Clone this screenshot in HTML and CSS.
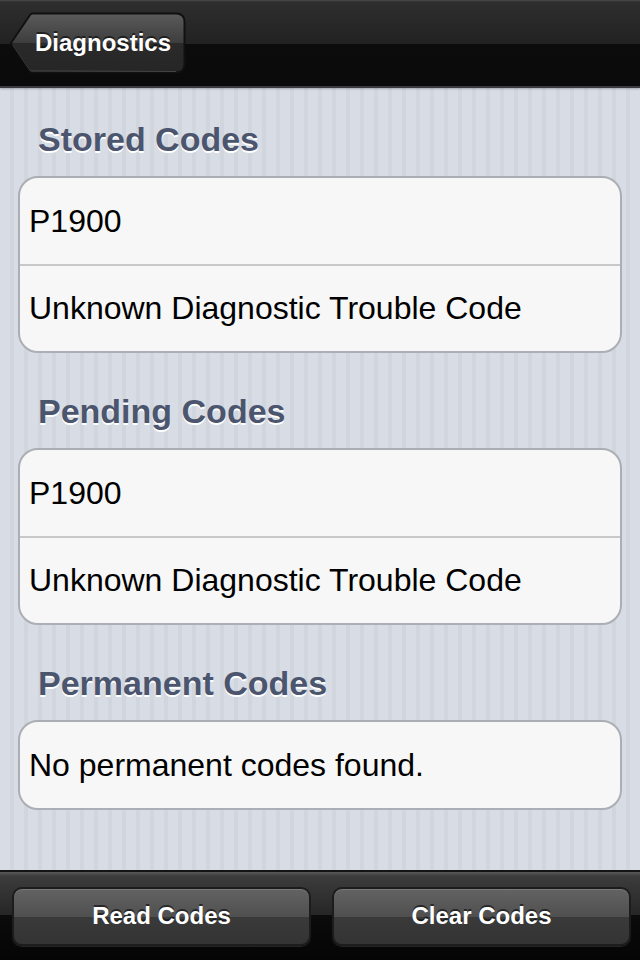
FILE: index.html
```html
<!DOCTYPE html>
<html>
<head>
<meta charset="utf-8">
<link rel="stylesheet" href="styles.css">
</head>
<body>
<div class="screen">
  <header class="navbar">
    <div class="back">
      <svg class="back-shape" width="178" height="62" viewBox="0 0 178 62">
        <defs>
          <linearGradient id="bg" x1="0" y1="0" x2="0" y2="1">
            <stop offset="0" stop-color="#5b5b5b"/>
            <stop offset="0.5" stop-color="#3d3d3d"/>
            <stop offset="0.5" stop-color="#2a2a2a"/>
            <stop offset="1" stop-color="#262626"/>
          </linearGradient>
        </defs>
        <path d="M2 31 L21 3 Q22 1.5 24 1.5 L167 1.5 Q175.5 1.5 175.5 10 L175.5 52 Q175.5 60.5 167 60.5 L24 60.5 Q22 60.5 21 59 Z" fill="url(#bg)" stroke="#111" stroke-width="2"/>
        <path d="M3.5 32.5 L21.5 59 L167 59.5" fill="none" stroke="rgba(255,255,255,0.18)" stroke-width="1"/>
      </svg>
      <span class="back-label">Diagnostics</span>
    </div>
  </header>
  <main class="content">
    <section class="group">
      <h2 class="group-title">Stored Codes</h2>
      <div class="card">
        <div class="cell">P1900</div>
        <div class="cell">Unknown Diagnostic Trouble Code</div>
      </div>
    </section>
    <section class="group">
      <h2 class="group-title">Pending Codes</h2>
      <div class="card">
        <div class="cell">P1900</div>
        <div class="cell">Unknown Diagnostic Trouble Code</div>
      </div>
    </section>
    <section class="group">
      <h2 class="group-title">Permanent Codes</h2>
      <div class="card">
        <div class="cell">No permanent codes found.</div>
      </div>
    </section>
  </main>
  <footer class="toolbar">
    <button class="tool-btn">Read Codes</button>
    <button class="tool-btn">Clear Codes</button>
  </footer>
</div>
</body>
</html>
```
FILE: styles.css
```css
* { box-sizing: border-box; }
html, body { margin: 0; padding: 0; }
body {
  width: 640px;
  height: 960px;
  font-family: "Liberation Sans", Arial, sans-serif;
  overflow: hidden;
}
.screen {
  width: 640px;
  height: 960px;
  display: flex;
  flex-direction: column;
  background: repeating-linear-gradient(90deg, #d8dce5 0 10px, #d1d5de 10px 14px);
}
.navbar {
  height: 88px;
  flex: none;
  display: flex;
  align-items: center;
  padding-left: 9px;
  background: linear-gradient(#4b4b4b 0, #2e2e2e 2px, #222 44px, #0c0c0c 44px, #0a0a0a 86px);
  border-bottom: 2px solid #3a3b3e;
  box-shadow: 0 1px 2px rgba(0,0,0,0.25);
}
.back {
  position: relative;
  width: 178px;
  height: 62px;
  display: flex;
  align-items: center;
  padding-left: 26px;
}
.back-shape {
  position: absolute;
  left: 0;
  top: 0;
}
.back-label {
  position: relative;
  color: #fff;
  font-weight: bold;
  font-size: 24px;
  text-shadow: 0 -2px 0 rgba(0,0,0,0.55);
}
.content {
  flex: 1;
  padding-top: 31px;
}
.group + .group { margin-top: 38px; }
.group-title {
  margin: 0 0 17px;
  padding-left: 38px;
  font-size: 34px;
  line-height: 40px;
  font-weight: bold;
  color: #4b556d;
  text-shadow: 0 2px 0 #fff;
}
.card {
  margin: 0 18px;
  background: #f7f7f7;
  border: 2px solid #abaeb4;
  border-radius: 20px;
  overflow: hidden;
}
.cell {
  height: 86px;
  display: flex;
  align-items: center;
  padding-left: 9px;
  font-size: 32px;
  color: #000;
}
.cell + .cell {
  border-top: 2px solid #c8c8ca;
  height: 87px;
}
.toolbar {
  height: 90px;
  flex: none;
  display: flex;
  align-items: center;
  gap: 21px;
  padding: 0 9px 0 12px;
  border-top: 2px solid #141414;
  background: linear-gradient(#595959 0, #3c3c3c 4px, #262626 43px, #0b0b0b 43px, #050505 88px);
}
.tool-btn {
  flex: 1;
  height: 59px;
  border: 2px solid #1c1c1c;
  border-radius: 10px;
  background: linear-gradient(#636363 0, #4f4f4f 28px, #3a3a3a 28px, #333 57px);
  box-shadow: inset 0 1px 0 rgba(255,255,255,0.15), 0 1px 0 rgba(255,255,255,0.12);
  color: #fff;
  font-family: "Liberation Sans", Arial, sans-serif;
  font-weight: bold;
  font-size: 24px;
  text-shadow: 0 -2px 0 rgba(0,0,0,0.55);
  padding: 0;
}
```
